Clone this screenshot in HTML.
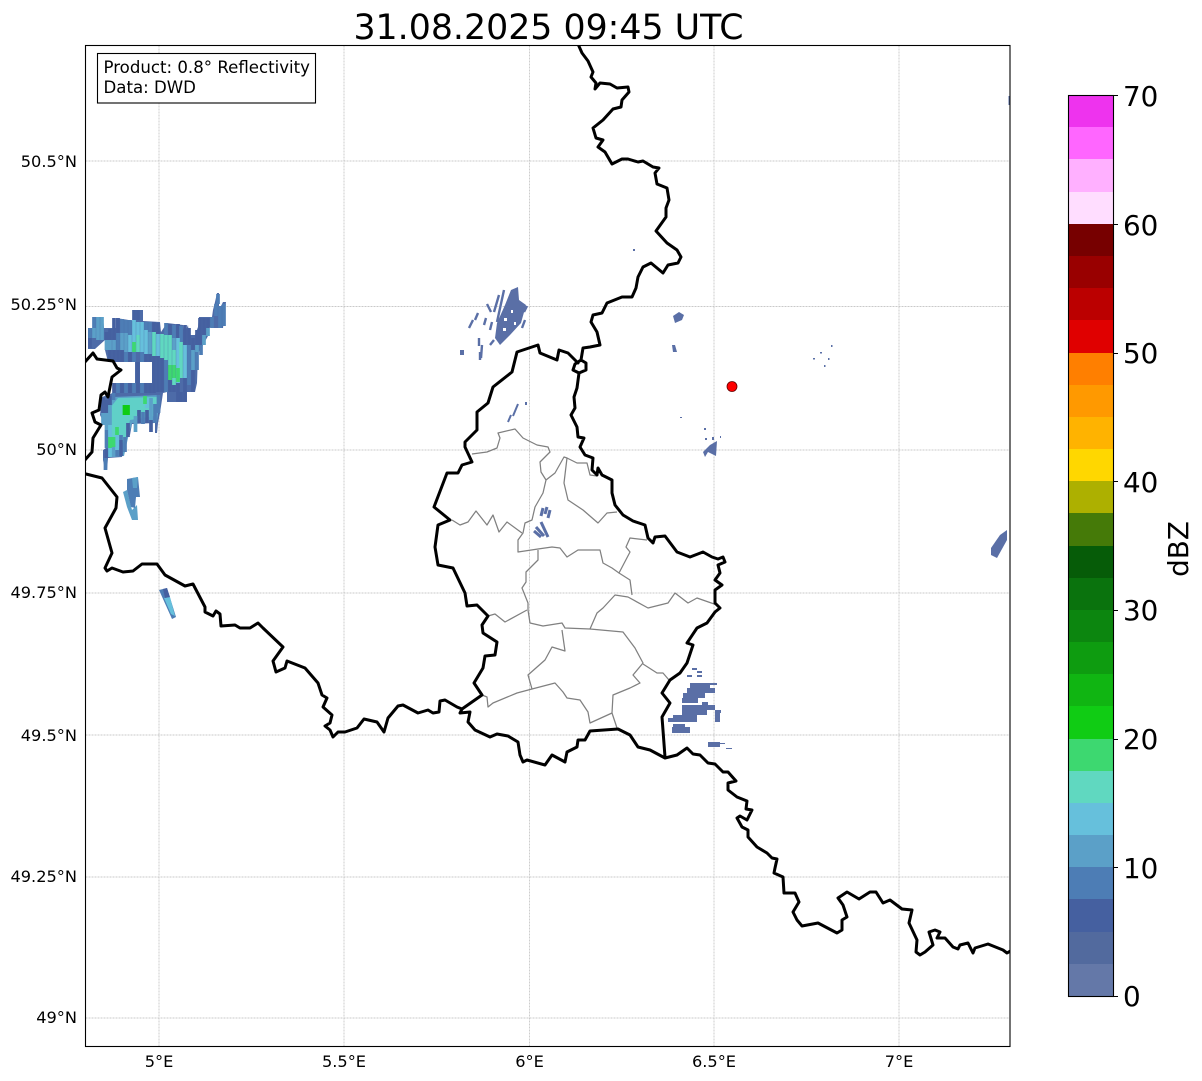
<!DOCTYPE html>
<html><head><meta charset="utf-8"><title>Radar</title>
<style>html,body{margin:0;padding:0;background:#fff}svg{display:block}text{font-family:"DejaVu Sans","Liberation Sans",sans-serif;fill:#000}</style></head>
<body>
<svg width="1202" height="1081" viewBox="0 0 1202 1081" xmlns="http://www.w3.org/2000/svg">
<defs>
<clipPath id="ax"><rect x="85.5" y="45.5" width="924.5" height="1001"/></clipPath>
</defs>
<rect width="1202" height="1081" fill="#fff"/>
<g stroke="#b8b8b8" stroke-width=".7" stroke-dasharray="2 1" fill="none">
<path d="M159 45.5V1046M344 45.5V1046M529.5 45.5V1046M714 45.5V1046M899 45.5V1046"/>
<path d="M85.5 161H1010M85.5 306.5H1010M85.5 450H1010M85.5 593H1010M85.5 735H1010M85.5 877H1010M85.5 1018H1010"/>
</g>
<g clip-path="url(#ax)">
<path fill="#4d6ba8" d="M88 328H93V317H103L104 328H116V318L135 321V310H143V321L160 322L161 332L167 323L183 325L184 335L188 325L189 335H195L198 327L199 317H212L213 310L215 302L217 293H219L219 310L223 302H226L225 311L223 328H212L208 327V336L203 345L198 353L197 383L195 392H187V402H182V392H178V402H167V392L163 393L160 413L158 423L157 433H155V423L132 424L130 435L123 437L122 457L108 458L107 470H105L103 460V450L106 448L105 425L100 415L102 397L113 393V383H135V362H108L105 350V340L95 349H88Z"/>
<path fill="#5ba0c8" d="M113 397L160 395L157 422L132 423L128 438L124 456L109 457L107 433L103 412Z"/>
<path fill="#60d0c8" d="M118 398L158 397L155 416L130 420L126 437L120 448L110 452L108 433L106 413Z"/>
<g fill="none" stroke-width="3.7">
<g stroke="#4560a0">
<path d="M90 338V348M106.500 332V340M110 329V340M110 350V360M114 318V340M114 350V362M118 318V333M118 350V362M122 350V362M130 352V362M134 310V320M138 310V320M138 362V393M146 354V362M150 354V362M154 322V332M154 356V393M158 323V334M158 356V392M162 358V392M170 324V335M170 380V392M178 324V338M178 383V402M185 325V345M185 378V402M189 328V345M193 338V350M193 370V392M197 330V345M200 318V345M204 318V335M208 318V328"/>
<path d="M114 383V393M122 383V393M130 383V393M146 383V393M150 383V393M103 398V413M106.500 400V413M106.500 449V458M110 396V405M128 423V437M121 440V456M139 410V423M147 410V423M151 420V432"/>
<path d="M174 385V392M181 392V402"/>
</g>
<g stroke="#4d7db5">
<path d="M90 328V338M94 317V328M118 333V350M122 319V333M126 320V333M126 352V362M130 320V335M134 352V362M142 352V362M146 322V330M150 322V332M166 360V392M166 323V335M174 325V338M181 326V342M189 345V385M197 345V370M201 345V355M212 317V328M216 304V316M220 306V328M224 304V326"/>
<path d="M118 383V393M126 383V393M134 383V393M142 383V393M106.500 430V448M113.500 393V400M117 450V456M121 435V440M143 412V424M155 404V423M158.500 395V413M105.500 458V470M125 437V452"/>
<path d="M218 294V304"/>
</g>
<g stroke="#5ba0c8">
<path d="M94 328V338M98 317V340M102 317V340M106.500 340V350M110 340V350M114 340V350M122 333V350M126 333V352M150 332V354M174 338V350M193 350V370M197 345V352M204 335V345M208 328V336"/>
<path d="M103 413V425M106.500 413V430M110 405V425M135.500 416V432M151 398V420M113.500 445V457"/>
</g>
<g stroke="#66c0dc">
<path d="M130 335V352M134 320V352M138 322V335M142 322V352M146 330V354M158 334V356M178 338V383M185 345V378M117 435V450M110 425V437M110 448V457M147 398V408"/>
</g>
<g stroke="#60d8c0">
<path d="M138 335V352M154 332V356M162 334V358M166 335V360M170 335V365M174 350V365M174 378V385M181 342V378"/>
</g>
<g stroke="#3dd870">
<path d="M170 365V380M174 365V378M178 368V382M134 342V352M145 396V404M110 437V448M113.500 437V447M117 427V435"/>
</g>
<path stroke="#10cc14" d="M124.500 405V415M128 405V415"/>
</g>
<path fill="#fff" d="M121 362H135V383H121ZM140 362H152V383H140Z"/>
<path fill="#5ba0c8" d="M123 492L127 490L132 510L137 505L138 520L132 520L127 507Z"/>
<path fill="#4d7db5" d="M127 479L138 477L140 497L136 497L135 508L131 507L127 490Z"/>
<path fill="#5ba0c8" d="M132 478L138 477L137 488L133 488Z"/>
<path fill="#4d7db5" d="M159 590L167 588L176 617L172 619Z"/>
<path fill="#66c0dc" d="M164 598L170 597L175 616L171 614Z"/>
<path fill="#4560a0" d="M163 589L167 588L170 597L165 598Z"/>
<g fill="#5a6fa6">
<path d="M991 548L1000 535L1007 530V540L997 558L991 555Z"/>
<rect x="1008.500" y="96" width="2" height="9"/>
<path d="M497 323L505 305L511 290L518 287L519 300L526 305L521 323L510 335L500 345L495 338Z"/>
<path d="M673 316L679 312L684 315L682 320L675 323Z"/>
<path d="M672 345L675 345L677 352H673Z"/>
<path d="M703 452L710 445L717 441L716 456L708 452L705 457Z"/>
<path d="M687 675H692V677H687ZM692 668H697V670H692ZM697 671H702V673H697ZM697 675H702V677H697ZM690 683H710V688H690ZM710 683H717V685H710ZM687 688H715V693H687ZM683 693H705V698H683ZM682 698H698V703H682ZM702 702H708V705H702ZM682 705H715V710H682ZM682 710H707V715H682ZM715 710H721V713H715ZM673 715H697V722H673ZM715 713H720V722H715ZM668 718H673V722H668ZM673 724H685V727H673ZM672 727H690V733H672ZM708 742H720V747H708Z"/>
<rect x="720" y="743" width="5" height="1"/>
<rect x="726" y="748" width="6" height="1"/>
<rect x="460" y="350" width="4" height="5"/>
<rect x="633" y="249" width="2" height="2"/>
<rect x="680" y="417" width="2" height="1"/>
<rect x="704" y="428" width="2" height="2"/><rect x="705" y="438" width="2" height="2"/><rect x="712" y="437" width="2" height="3"/><rect x="720" y="436" width="1" height="2"/>
<rect x="831" y="345" width="1.500" height="2"/><rect x="820" y="352" width="2" height="1.500"/><rect x="813" y="358" width="2" height="1.500"/><rect x="824" y="365" width="1.500" height="2"/><rect x="828" y="358" width="1.500" height="2"/>
</g>
<path fill="#fff" d="M504 318h3v3h-3ZM511 310h2v3h-2ZM503 328h3v3h-3ZM514 322h2v3h-2Z"/>
<g stroke="#5a6fa6" stroke-width="2.400" fill="none">
<path d="M499 295L494 312M504 290L497 322M492 322L490 330M479 338V346M482 345L481 358M473 320L469 328M478 313L475 320M487 304L491 312M486 318L484 325M527 306L524 312M525 320L522 328M494 340L490 345M480 352V360"/>
<path d="M508 422L511 415M513 416L518 404M526 402V405" stroke-width="2"/>
<path d="M534 531L541 537M536 527L544 536M541 522L548 537M543 508L541 516M547 507L545 514M550 510L548 518" stroke-width="3"/>
</g>

<g fill="none" stroke="#808080" stroke-width="1.250" stroke-linejoin="round">
<path d="M472 454L487 452L497 448L500 438L498 433L515 429L523 438L537 445L548 447L550 452L540 462L541 472L546 480L543 493L535 507L532 520L525 523L523 533L518 540L518 552L538 549L552 547L560 548L567 557L578 550L600 550L603 563L612 568L619 573L630 552L626 547L630 538L647 540"/>
<path d="M452 520L460 525L468 522L476 511L487 525L493 515L499 532L507 522L522 533"/>
<path d="M546 480L555 473L564 457L567 458L564 483L568 500L583 510L598 523L607 513L617 512"/>
<path d="M567 458L577 463L587 463L590 475L597 476"/>
<path d="M619 573L630 580L632 595"/>
<path d="M538 550V560L526 572V582L522 588L528 603V610L530 623L543 626L562 623L565 628L590 629L597 613L603 608L615 595L628 597L648 608L668 603L675 593L688 603L697 598L717 605"/>
<path d="M590 629L623 632L635 648L643 663L633 675L640 683L630 688L613 695L612 713L617 728"/>
<path d="M643 664L657 673H663L669 680"/>
<path d="M612 713L590 723L588 712L580 700L567 698L563 692L555 683L532 689L528 675L545 660L552 647L565 651L562 630"/>
<path d="M532 689L517 693L493 703L488 707L487 697L482 695"/>
<path d="M527 610L505 622L495 614L488 616"/>
</g>
<g fill="none" stroke="#000" stroke-width="3" stroke-linejoin="round" stroke-linecap="round">
<path d="M578 44L582 53L588 61L593 72L591 77L596 83L595 89L600 83L610 84L617 88L628 87L629 92L622 100L621 107L613 109L603 120L593 128L596 138L603 140L598 147L605 152L612 164L622 159L628 159L638 162L643 161L653 167L659 168L655 173L657 184L667 188L669 200L666 208L666 217L656 231L667 243L677 250L681 257L678 263L668 265L663 273L651 263L643 267L638 277L636 288L632 297L622 297L607 303L602 313L593 315L591 322L597 332L600 345L590 347L583 348L581 360L586 363L586 370L579 373L573 370L575 364L581 360M579 373L577 388L574 397L575 408L571 415L577 427L578 437L584 438L580 447L585 455L593 458L592 470L597 475L598 468L602 475L612 480L612 493L615 505L623 515L633 521L645 525L648 538L653 543L655 537L665 536L677 552L690 557L703 552L712 557L718 559L723 557L725 562L718 565L720 573L715 580L722 585L715 590L715 603L720 608L715 612L707 623L697 628L687 643L693 645L687 663L680 673L670 680L662 693L670 703L662 717L665 757"/>
<path d="M86 474L102 478L117 497L116 508L105 528L112 553L105 568L107 571L112 568L123 572L133 571L142 564L157 564L165 575L185 586L193 584L205 607L205 612L213 616L216 611L220 614L221 626L235 625L240 628L250 628L258 623L263 628L283 647L273 661L276 672L285 668L287 661L305 668L318 683L322 695L327 698L323 707L332 715L330 723L325 726L330 730L333 737L338 732L345 732L357 728L364 719L377 722L384 732L388 718L398 706L403 705L418 713L428 710L433 713L439 712L440 701L445 700L457 707L462 709L460 713L470 712L468 722L475 730L490 737L497 734L508 736L518 742L520 755L523 762L527 760L545 765L552 755L565 762L567 752L577 747L578 740L585 740L590 731L618 729L630 735L638 747L650 750L665 758L677 755L687 748L693 754L700 755L708 763L715 764L723 772L728 772L736 781L728 783L728 790L737 797L747 801L746 809L752 810L747 820L740 816L737 818L742 827L748 830L748 837L757 847L767 853L772 858L777 859L775 868L774 873L783 877L784 893L795 893L799 902L793 912L797 920L802 926L818 923L837 933L842 930L842 920L847 917L843 905L838 898L847 892L859 899L870 892L876 892L883 903L890 900L902 909L912 910L909 923L917 940L916 952L920 955L925 952L933 945L929 932L935 930L940 932L937 938L945 938L953 947L958 949L960 945L968 943L973 953L975 948L988 944L1003 950L1007 953L1012 950"/>
<path d="M462 709L482 695L474 683L483 668L485 656L495 655L497 642L483 633L482 625L488 616L477 605L467 606L465 593L453 568L438 565L435 547L438 525L450 520L434 507L447 473L458 473L462 465L472 462L465 447V442L477 430V412L488 403L493 387L512 372L517 352L538 345L540 353L557 360L559 350L568 353L578 363"/>
<path d="M84 363L93 353L97 359L113 361L117 368L121 370L112 377L108 397L105 392L101 395L99 410L92 413L95 422L101 425L93 438L92 452L84 461"/>
</g>
<circle cx="732" cy="386.500" r="5" fill="#f00" stroke="#600" stroke-width=".8"/>
</g>
<rect x="85.500" y="45.500" width="924.500" height="1001" fill="none" stroke="#000" stroke-width="1.100"/>
<rect x="97.500" y="53.500" width="218" height="49.500" fill="#fff" stroke="#000" stroke-width="1.100"/>
<text x="103.500" y="73" font-size="16.600">Product: 0.8° Reflectivity</text>
<text x="103.500" y="93" font-size="16.600">Data: DWD</text>
<text x="548.500" y="39" font-size="34.750" text-anchor="middle">31.08.2025 09:45 UTC</text>
<g font-size="16.200" text-anchor="end">
<text x="77" y="167">50.5°N</text><text x="77" y="310">50.25°N</text><text x="77" y="455">50°N</text><text x="77" y="598">49.75°N</text><text x="77" y="741">49.5°N</text><text x="77" y="882">49.25°N</text><text x="77" y="1023">49°N</text>
</g>
<g font-size="16.200" text-anchor="middle">
<text x="159" y="1067">5°E</text><text x="344" y="1067">5.5°E</text><text x="529.500" y="1067">6°E</text><text x="714" y="1067">6.5°E</text><text x="899" y="1067">7°E</text>
</g>
<g shape-rendering="crispEdges">
<rect x="1068" y="95" width="45" height="33" fill="#ee33ee"/>
<rect x="1068" y="127" width="45" height="33" fill="#ff66ff"/>
<rect x="1068" y="159" width="45" height="33" fill="#ffb0ff"/>
<rect x="1068" y="192" width="45" height="33" fill="#ffddff"/>
<rect x="1068" y="224" width="45" height="33" fill="#770000"/>
<rect x="1068" y="256" width="45" height="33" fill="#990000"/>
<rect x="1068" y="288" width="45" height="33" fill="#bb0000"/>
<rect x="1068" y="320" width="45" height="33" fill="#e00000"/>
<rect x="1068" y="353" width="45" height="33" fill="#ff7f00"/>
<rect x="1068" y="385" width="45" height="33" fill="#ff9900"/>
<rect x="1068" y="417" width="45" height="33" fill="#ffb300"/>
<rect x="1068" y="449" width="45" height="33" fill="#ffd700"/>
<rect x="1068" y="481" width="45" height="33" fill="#adb000"/>
<rect x="1068" y="513" width="45" height="34" fill="#457a08"/>
<rect x="1068" y="546" width="45" height="33" fill="#065c08"/>
<rect x="1068" y="578" width="45" height="33" fill="#0a730d"/>
<rect x="1068" y="610" width="45" height="33" fill="#0c860f"/>
<rect x="1068" y="642" width="45" height="33" fill="#0e9c10"/>
<rect x="1068" y="674" width="45" height="33" fill="#10b512"/>
<rect x="1068" y="706" width="45" height="33" fill="#10cc14"/>
<rect x="1068" y="739" width="45" height="33" fill="#3dd870"/>
<rect x="1068" y="771" width="45" height="33" fill="#60d8c0"/>
<rect x="1068" y="803" width="45" height="33" fill="#66c0dc"/>
<rect x="1068" y="835" width="45" height="33" fill="#5ba0c8"/>
<rect x="1068" y="867" width="45" height="33" fill="#4d7db5"/>
<rect x="1068" y="899" width="45" height="33" fill="#4560a0"/>
<rect x="1068" y="932" width="45" height="33" fill="#526a9e"/>
<rect x="1068" y="964" width="45" height="33" fill="#6478a8"/>
</g>
<rect x="1068.500" y="95.500" width="45" height="901" fill="none" stroke="#000" stroke-width="1.100"/>
<path d="M1113 95.500h5M1113 224.500h5M1113 353.500h5M1113 481.500h5M1113 610.500h5M1113 739.500h5M1113 867.500h5M1113 996.500h5" stroke="#000" stroke-width="1.100"/>
<g font-size="27.780">
<text x="1123" y="106">70</text><text x="1123" y="235">60</text><text x="1123" y="363">50</text><text x="1123" y="492">40</text><text x="1123" y="620">30</text><text x="1123" y="749">20</text><text x="1123" y="878">10</text><text x="1123" y="1006">0</text>
</g>
<text transform="translate(1188 549) rotate(-90)" font-size="27.780" text-anchor="middle">dBZ</text>
</svg>
</body></html>
